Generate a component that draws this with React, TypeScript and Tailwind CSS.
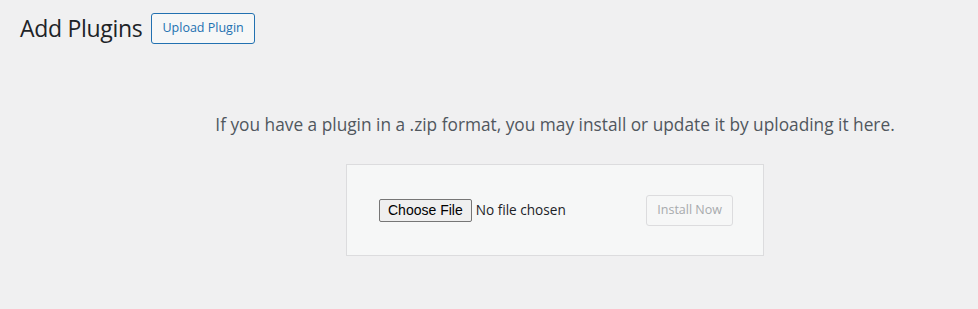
import React from 'react'

const App = () => {
  return (
    <div className="min-h-[309px] w-[978px] bg-[#f0f0f1] font-['Open_Sans',_'Noto_Sans',_sans-serif] text-[#1d2327]">
      <div className="flex items-center gap-[9px] pl-[20px] pt-[13px]">
        <h1 className="text-[23px] font-normal leading-[31px] tracking-[-0.3px]">Add Plugins</h1>
        <button className="h-[31px] rounded-[3px] border border-[#2271b1] bg-[#f6f7f7] px-[10px] text-[12.5px] text-[#2271b1]">
          Upload Plugin
        </button>
      </div>

      <div className="flex flex-col items-center pl-[132px] pt-[69px]">
        <p className="text-[17.3px] leading-[24px] text-[#50575e]">
          If you have a plugin in a .zip format, you may install or update it by uploading it here.
        </p>
        <div className="mt-[27px] flex h-[92px] w-[418px] items-center justify-between border border-[#dcdcde] bg-[#f6f7f7] pl-[32px] pr-[30px]">
          <div className="flex items-center gap-[4px]">
            <span className="flex h-[23px] items-center rounded-[2px] border border-[#767676] bg-[#efefef] px-[8px] font-['Liberation_Sans',_Arial,_sans-serif] text-[14px] text-black">
              Choose File
            </span>
            <span className="text-[13.6px] text-[#1d2327]">No file chosen</span>
          </div>
          <button
            disabled
            className="h-[31px] rounded-[3px] border border-[#dcdcde] bg-[#f6f7f7] px-[10px] text-[12.5px] text-[#a7aaad]"
          >
            Install Now
          </button>
        </div>
      </div>
    </div>
  )
}

export default App
